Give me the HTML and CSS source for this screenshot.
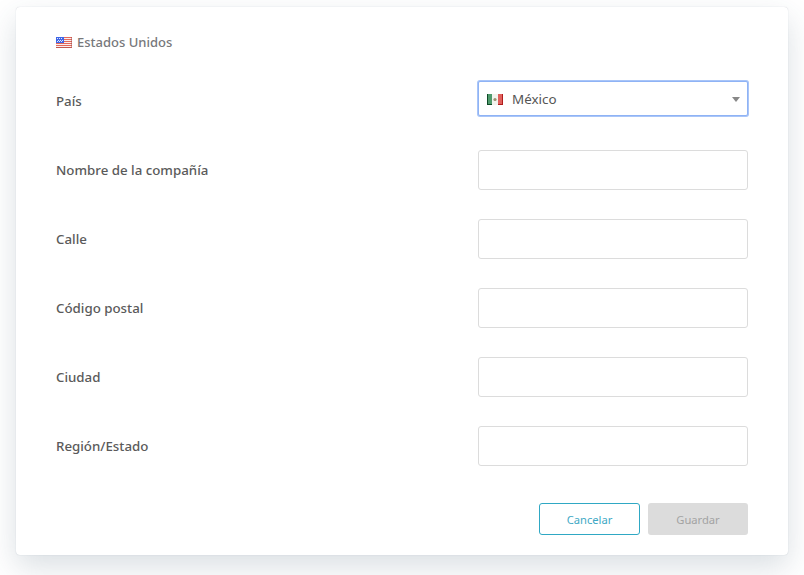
FILE: index.html
```html
<!DOCTYPE html>
<html lang="es">

<head>
    <meta charset="UTF-8">
    <title>Dirección</title>
    <link rel="stylesheet" href="styles.css">
</head>

<body>

    <form class="card">
        <div class="card-title">
            <svg class="flag" width="16" height="11" viewBox="0 0 16 11">
                <rect width="16" height="11" fill="#f8eeee"/>
                <path d="M0 0h16v1H0zM0 2h16v1H0zM0 4h16v1H0zM0 6h16v1H0zM0 8h16v1H0zM0 10h16v1H0z" fill="#e4685a"/>
                <rect width="8" height="6" fill="#3f66e6"/>
                <path d="M1 1h1v1H1zM3 1h1v1H3zM5 1h1v1H5zM2 3h1v1H2zM4 3h1v1H4zM6 3h1v1H6zM1 4h1v1H1zM3 4h1v1H3zM5 4h1v1H5z" fill="#dfe6fa"/>
                <path d="M15.5 0v10.5H0" fill="none" stroke="#a04a48" stroke-opacity="0.5"/>
            </svg>
            <span>Estados Unidos</span>
        </div>

        <div class="row">
            <label>País</label>
            <div class="select">
                <svg class="flag" width="16" height="11" viewBox="0 0 16 11">
                    <rect width="16" height="11" fill="#f3f3ee"/>
                    <rect width="5" height="11" fill="#4f9a6c"/>
                    <rect x="11" width="5" height="11" fill="#e0605c"/>
                    <rect width="1" height="11" fill="#0d4a27"/>
                    <rect x="15" width="1" height="11" fill="#b01c1c"/>
                    <rect y="10" width="5" height="1" fill="#0d4a27"/>
                    <rect x="11" y="10" width="5" height="1" fill="#b01c1c"/>
                    <circle cx="8" cy="5.5" r="1.6" fill="#9a9070"/>
                </svg>
                <span class="select-value">México</span>
                <span class="caret"></span>
            </div>
        </div>
        <div class="row">
            <label>Nombre de la compañía</label>
            <input type="text">
        </div>
        <div class="row">
            <label>Calle</label>
            <input type="text">
        </div>
        <div class="row">
            <label>Código postal</label>
            <input type="text">
        </div>
        <div class="row">
            <label>Ciudad</label>
            <input type="text">
        </div>
        <div class="row">
            <label>Región/Estado</label>
            <input type="text">
        </div>

        <div class="actions">
            <button type="button" class="btn btn-outline">Cancelar</button>
            <button type="button" class="btn btn-disabled">Guardar</button>
        </div>
    </form>

</body>

</html>
```

FILE: styles.css
```css
html {
    height: 100%;
}

body {
    margin: 0;
    height: 575px;
    overflow: hidden;
    box-sizing: border-box;
    padding: 7px 16px 0;
    background: #fff;
    font-family: "Noto Sans", sans-serif;
    color: #555;
}

.card {
    height: 548px;
    box-sizing: border-box;
    padding: 26px 40px 0;
    background: #fff;
    border-radius: 4px;
    box-shadow: 0 0 1px rgba(60, 80, 100, 0.3), 0 12px 30px rgba(50, 75, 100, 0.18);
}

.card-title {
    display: flex;
    align-items: center;
    gap: 5px;
    height: 18px;
    margin-bottom: 30px;
    font-size: 13px;
    font-weight: 500;
    color: #77787b;
}

.flag {
    flex: none;
}

.row {
    display: flex;
    justify-content: space-between;
    align-items: center;
    height: 40px;
    margin-bottom: 29px;
}

.row label {
    font-size: 13.3px;
    font-weight: 500;
    color: #5a5a5a;
}

.row input {
    width: 270px;
    height: 40px;
    box-sizing: border-box;
    border: 1px solid #dcdcdc;
    border-radius: 3px;
    background: #fff;
}

.select {
    display: flex;
    align-items: center;
    align-self: flex-start;
    width: 270px;
    height: 35px;
    box-sizing: border-box;
    padding: 0 7px 0 8px;
    border: 1px solid #8fb3f5;
    box-shadow: 0 0 0 1px #a9c5f8;
    border-radius: 2px;
    background: #fff;
}

.select .flag {
    margin-top: 1px;
}

.select-value {
    flex: 1;
    margin-left: 9px;
    font-size: 13.4px;
    color: #555;
}

.caret {
    width: 0;
    height: 0;
    margin-top: 1px;
    border-left: 4px solid transparent;
    border-right: 4px solid transparent;
    border-top: 5px solid #888;
}

.actions {
    display: flex;
    justify-content: flex-end;
    gap: 8px;
    margin-top: 37px;
}

.btn {
    width: 101px;
    height: 32px;
    box-sizing: border-box;
    border-radius: 3px;
    font-family: inherit;
    font-size: 11.2px;
    cursor: pointer;
}

.btn-outline {
    background: #fff;
    border: 1px solid #2fa8c4;
    color: #3fa9c5;
}

.btn-disabled {
    width: 100px;
    background: #dcdcdc;
    border: 0;
    color: #a3a3a3;
}
```
